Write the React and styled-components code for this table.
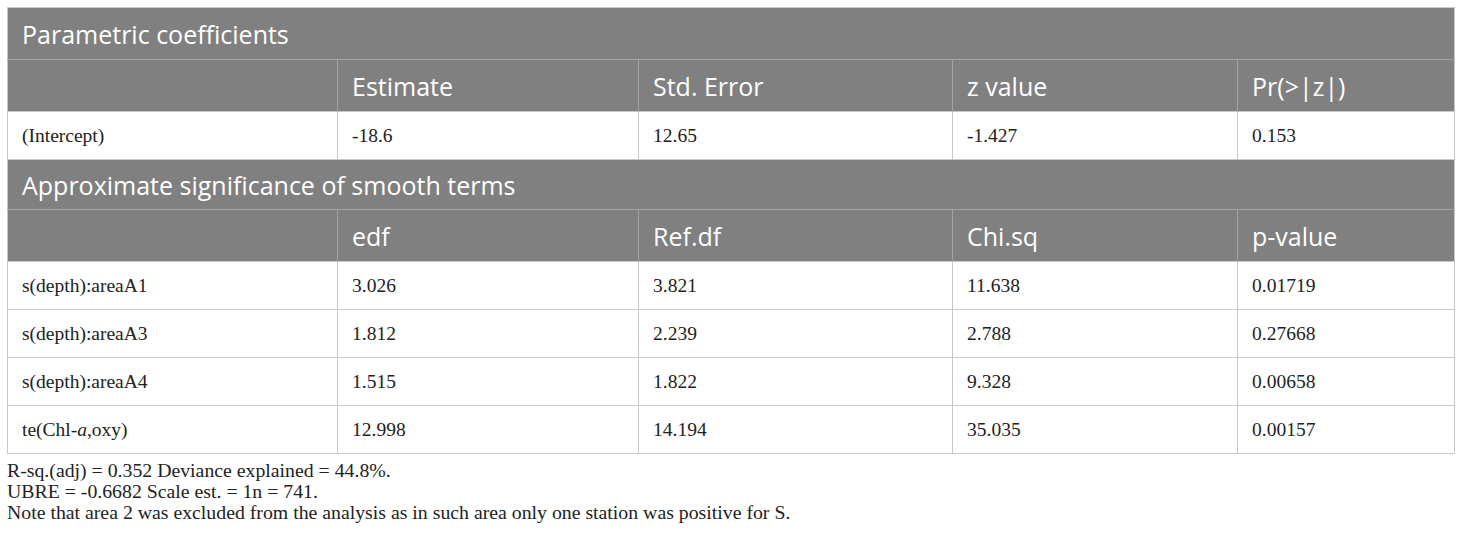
import React from "react";
import styled, { createGlobalStyle } from "styled-components";

const Global = createGlobalStyle`
  html, body { margin: 0; padding: 0; background: #fff; }
`;

const Page = styled.div`
  padding: 7px 6px 0 7px;
`;

const Table = styled.table`
  width: 1447px;
  border-collapse: collapse;
  table-layout: fixed;
  border: 1px solid #c9c9c9;
`;

const Col = styled.col`
  width: ${(p) => p.$w}px;
`;

const TitleCell = styled.th`
  background: #808080;
  color: #fff;
  font-family: "Open Sans", "Noto Sans", sans-serif;
  font-weight: 400;
  font-size: 25px;
  line-height: 30px;
  text-align: left;
  padding: 0 14px;
  height: ${(p) => p.$h}px;
  border-bottom: 1px solid #a3a3a3;
`;

const HeadCell = styled.th`
  background: #808080;
  color: #fff;
  font-family: "Open Sans", "Noto Sans", sans-serif;
  font-weight: 400;
  font-size: 25px;
  line-height: 30px;
  text-align: left;
  padding: 0 14px;
  height: 51px;
  border-left: 1px solid #a3a3a3;
  &:first-child { border-left: none; }
`;

const Cell = styled.td`
  font-family: "Liberation Serif", "Times New Roman", serif;
  font-size: 19.5px;
  color: #222;
  padding: 0 14px;
  height: 47px;
  border: 1px solid #c9c9c9;
`;

const Notes = styled.div`
  margin-top: 6px;
  font-family: "Liberation Serif", "Times New Roman", serif;
  font-size: 19.8px;
  color: #222;
  line-height: 21px;
`;

const NoteLine = styled.div``;

const widths = [330, 301, 314, 285, 217];
const header1 = ["", "Estimate", "Std. Error", "z value", "Pr(>|z|)"];
const header2 = ["", "edf", "Ref.df", "Chi.sq", "p-value"];
const intercept = ["(Intercept)", "-18.6", "12.65", "-1.427", "0.153"];
const rows = [
  [<>s(depth):areaA1</>, "3.026", "3.821", "11.638", "0.01719"],
  [<>s(depth):areaA3</>, "1.812", "2.239", "2.788", "0.27668"],
  [<>s(depth):areaA4</>, "1.515", "1.822", "9.328", "0.00658"],
  [<>te(Chl-<i>a</i>,oxy)</>, "12.998", "14.194", "35.035", "0.00157"],
];

function HeaderRow({ cells }) {
  return (
    <tr>
      {cells.map((h, i) => (
        <HeadCell key={i}>{h}</HeadCell>
      ))}
    </tr>
  );
}

function DataRow({ cells }) {
  return (
    <tr>
      {cells.map((c, i) => (
        <Cell key={i}>{c}</Cell>
      ))}
    </tr>
  );
}

export default function App() {
  return (
    <Page>
      <Global />
      <Table>
        <colgroup>
          {widths.map((w, i) => (
            <Col key={i} $w={w} />
          ))}
        </colgroup>
        <tbody>
          <tr>
            <TitleCell colSpan={5} $h={51}>Parametric coefficients</TitleCell>
          </tr>
          <HeaderRow cells={header1} />
          <DataRow cells={intercept} />
          <tr>
            <TitleCell colSpan={5} $h={49}>Approximate significance of smooth terms</TitleCell>
          </tr>
          <HeaderRow cells={header2} />
          {rows.map((r, ri) => (
            <DataRow key={ri} cells={r} />
          ))}
        </tbody>
      </Table>
      <Notes>
        <NoteLine>R-sq.(adj) = 0.352 Deviance explained = 44.8%.</NoteLine>
        <NoteLine>UBRE = -0.6682 Scale est. = 1n = 741.</NoteLine>
        <NoteLine>Note that area 2 was excluded from the analysis as in such area only one station was positive for S.</NoteLine>
      </Notes>
    </Page>
  );
}
